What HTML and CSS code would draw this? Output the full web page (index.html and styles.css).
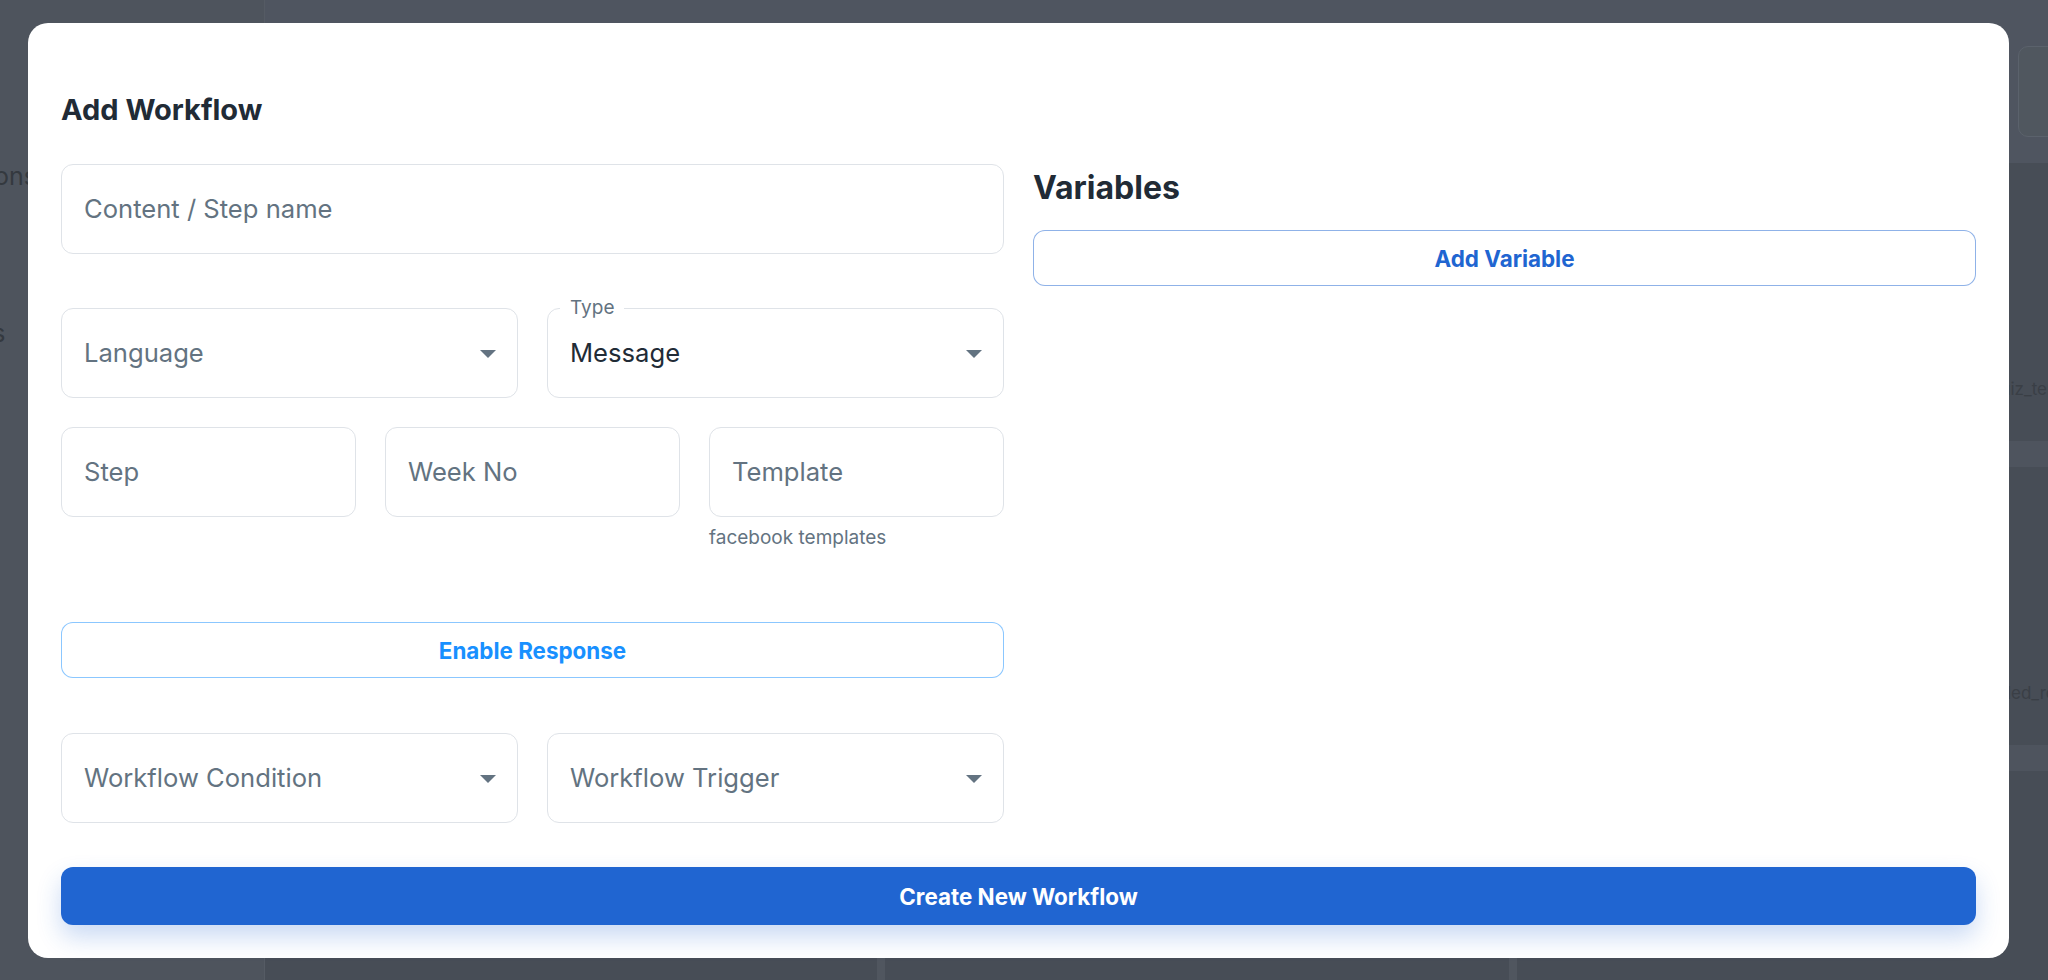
FILE: index.html
```html
<!DOCTYPE html>
<html lang="en">
<head>
<meta charset="utf-8">
<title>Add Workflow</title>
<link rel="stylesheet" href="styles.css">
</head>
<body>
<div class="page">
  <aside class="sidebar">
    <div class="nav-item">Questions</div>
    <div class="nav-item nav-item-second">Responses</div>
  </aside>
  <main class="content">
    <header class="content-header">
      <div class="header-card"></div>
    </header>
    <section class="list">
      <div class="list-row"><span class="list-text">quiz_template</span></div>
      <div class="list-row"><span class="list-text list-text-shift">enabled_response</span></div>
      <div class="card-grid">
        <div class="grid-card"></div>
        <div class="grid-card"></div>
        <div class="grid-card"></div>
      </div>
    </section>
  </main>
</div>

<div class="backdrop">
  <div class="modal">
    <h2 class="modal-title">Add Workflow</h2>
    <div class="modal-body">
      <div class="form-col">
        <div class="field field-content"><span class="placeholder">Content / Step name</span></div>

        <div class="row-2 row-lang">
          <div class="field select">
            <span class="placeholder">Language</span>
            <svg class="caret" width="16" height="8" viewBox="0 0 10 5"><path d="M0 0l5 5 5-5z"/></svg>
          </div>
          <div class="field select">
            <span class="float-label">Type</span>
            <span class="value">Message</span>
            <svg class="caret" width="16" height="8" viewBox="0 0 10 5"><path d="M0 0l5 5 5-5z"/></svg>
          </div>
        </div>

        <div class="row-3">
          <div class="field-wrap"><div class="field"><span class="placeholder">Step</span></div></div>
          <div class="field-wrap"><div class="field"><span class="placeholder">Week No</span></div></div>
          <div class="field-wrap">
            <div class="field"><span class="placeholder">Template</span></div>
            <p class="helper">facebook templates</p>
          </div>
        </div>

        <button class="btn btn-outline-info">Enable Response</button>

        <div class="row-2 row-workflow">
          <div class="field select">
            <span class="placeholder">Workflow Condition</span>
            <svg class="caret" width="16" height="8" viewBox="0 0 10 5"><path d="M0 0l5 5 5-5z"/></svg>
          </div>
          <div class="field select">
            <span class="placeholder">Workflow Trigger</span>
            <svg class="caret" width="16" height="8" viewBox="0 0 10 5"><path d="M0 0l5 5 5-5z"/></svg>
          </div>
        </div>
      </div>

      <div class="vars-col">
        <h3 class="vars-title">Variables</h3>
        <button class="btn btn-outline-primary">Add Variable</button>
      </div>
    </div>
    <button class="btn btn-primary">Create New Workflow</button>
  </div>
</div>
</body>
</html>
```

FILE: styles.css
```css
* {
  box-sizing: border-box;
  margin: 0;
  padding: 0;
}

html,
body {
  width: 2048px;
  height: 980px;
  overflow: hidden;
}

body {
  font-family: Inter, "Noto Sans", "Liberation Sans", sans-serif;
  background: #4a5059;
  color: #212b36;
}

/* ---------- dimmed page behind the dialog ---------- */
.page {
  display: flex;
  height: 980px;
}

.sidebar {
  width: 265px;
  flex: none;
  background: #4e545d;
  border-right: 1px solid #555b64;
  padding-top: 160px;
  display: flex;
  flex-direction: column;
  gap: 125px;
}

.nav-item {
  font-size: 25px;
  line-height: 32px;
  color: #34393f;
  margin-left: -82px;
}

.nav-item-second {
  margin-left: -124px;
}

.content {
  flex: 1;
  min-width: 0;
  overflow: hidden;
  display: flex;
  flex-direction: column;
}

.content-header {
  height: 163px;
  flex: none;
  background: #4f5560;
  display: flex;
  align-items: flex-start;
  padding: 46px 0 0 1753px;
}

.header-card {
  width: 80px;
  flex: none;
  height: 91px;
  border: 1px solid #5b626c;
  border-radius: 10px;
  background: #50575f;
}

.list {
  flex: 1;
  display: flex;
  flex-direction: column;
  background: #474d56;
}

.list-row {
  height: 304px;
  flex: none;
  display: flex;
  align-items: flex-end;
  padding-bottom: 40px;
  padding-left: 1725px;
  border-bottom: 26px solid #4e545e;
}

.list-text {
  font-size: 17px;
  line-height: 24px;
  color: #3a3f46;
  white-space: nowrap;
}

.list-text-shift {
  margin-left: -23px;
}

.card-grid {
  flex: 1;
  display: grid;
  grid-template-columns: 612px 624px 1fr;
  column-gap: 8px;
  background: #50565f;
}

.grid-card {
  background: #474d56;
}

/* ---------- dialog ---------- */
.backdrop {
  position: fixed;
  inset: 0;
  display: flex;
  align-items: flex-start;
  padding: 23px 0 0 28px;
}

.modal {
  width: 1981px;
  background: #ffffff;
  border-radius: 20px;
  padding: 69px 33px 33px 33px;
}

.modal-title {
  font-size: 29px;
  line-height: 36px;
  font-weight: 700;
  color: #212b36;
  margin-bottom: 36px;
}

.modal-body {
  display: grid;
  grid-template-columns: 1fr 1fr;
  column-gap: 29px;
}

.form-col {
  display: flex;
  flex-direction: column;
}

.field {
  position: relative;
  height: 90px;
  border: 1px solid #dfe3e8;
  border-radius: 12px;
  padding: 0 21px 0 22px;
  display: flex;
  align-items: center;
  justify-content: space-between;
  font-size: 25.6px;
  line-height: 32px;
  background: #ffffff;
}

.placeholder {
  color: #637381;
}

.value {
  color: #212b36;
}

.caret {
  fill: #637381;
  flex: none;
  margin-top: 2px;
}

.float-label {
  position: absolute;
  top: -11px;
  left: 12px;
  padding: 0 10px;
  background: #ffffff;
  font-size: 19px;
  line-height: 20px;
  color: #637381;
}

.field-content {
  margin-bottom: 54px;
}

.row-2 {
  display: grid;
  grid-template-columns: 1fr 1fr;
  column-gap: 29px;
}

.row-lang {
  margin-bottom: 29px;
}

.row-3 {
  display: grid;
  grid-template-columns: 1fr 1fr 1fr;
  column-gap: 29px;
  align-items: start;
  margin-bottom: 69px;
}

.helper {
  margin-top: 5px;
  font-size: 19px;
  line-height: 31px;
  color: #637381;
}

.btn {
  display: flex;
  align-items: center;
  justify-content: center;
  width: 100%;
  height: 56px;
  border-radius: 12px;
  background: #ffffff;
  font-family: inherit;
  font-size: 22.4px;
  font-weight: 700;
  cursor: pointer;
}

.btn-outline-info {
  border: 1px solid rgba(24, 144, 255, 0.5);
  color: #1890ff;
}

.btn-outline-primary {
  border: 1px solid rgba(32, 101, 209, 0.5);
  color: #2065d1;
  margin-top: 18px;
}

.row-workflow {
  margin-top: 55px;
}

.vars-col {
  display: flex;
  flex-direction: column;
}

.vars-title {
  font-size: 32px;
  line-height: 48px;
  font-weight: 700;
  color: #212b36;
}

.btn-primary {
  margin-top: 44px;
  height: 58px;
  border: none;
  background: #2065d1;
  color: #ffffff;
  box-shadow: 0 12px 24px rgba(32, 101, 209, 0.24);
}
```
